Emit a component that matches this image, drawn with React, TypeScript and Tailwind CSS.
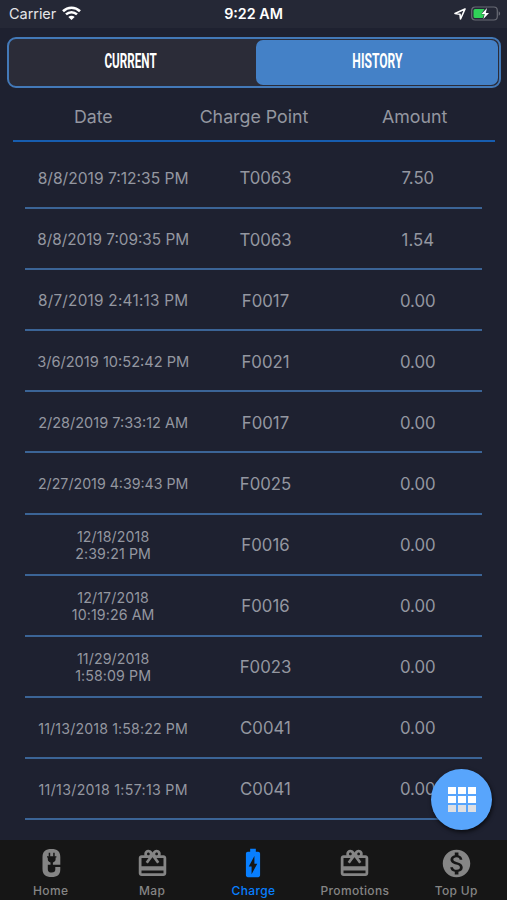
import React from 'react';
import { MdBatteryChargingFull, MdCardGiftcard, MdMonetizationOn } from 'react-icons/md';

type Charge = {
  date: string[];
  dateClass: string;
  point: string;
  amount: string;
};

const charges: Charge[] = [
  { date: ['8/8/2019 7:12:35 PM'], dateClass: 'text-[15.6px]', point: 'T0063', amount: '7.50' },
  { date: ['8/8/2019 7:09:35 PM'], dateClass: 'text-[15.3px]', point: 'T0063', amount: '1.54' },
  { date: ['8/7/2019 2:41:13 PM'], dateClass: 'text-[15.3px] tracking-[0.25px]', point: 'F0017', amount: '0.00' },
  { date: ['3/6/2019 10:52:42 PM'], dateClass: 'text-[14.6px]', point: 'F0021', amount: '0.00' },
  { date: ['2/28/2019 7:33:12 AM'], dateClass: 'text-[14.5px]', point: 'F0017', amount: '0.00' },
  { date: ['2/27/2019 4:39:43 PM'], dateClass: 'text-[14.2px]', point: 'F0025', amount: '0.00' },
  { date: ['12/18/2018', '2:39:21 PM'], dateClass: 'text-[14.2px] tracking-[0.1px]', point: 'F0016', amount: '0.00' },
  { date: ['12/17/2018', '10:19:26 AM'], dateClass: 'text-[14.2px] tracking-[0.1px]', point: 'F0016', amount: '0.00' },
  { date: ['11/29/2018', '1:58:09 PM'], dateClass: 'text-[14.2px] tracking-[0.1px]', point: 'F0023', amount: '0.00' },
  { date: ['11/13/2018 1:58:22 PM'], dateClass: 'text-[14.2px] tracking-[0.13px]', point: 'C0041', amount: '0.00' },
  { date: ['11/13/2018 1:57:13 PM'], dateClass: 'text-[14.2px] tracking-[0.3px]', point: 'C0041', amount: '0.00' },
];

const StatusBar: React.FC = () => (
  <div className="grid h-7 grid-cols-3 items-center bg-[#252836] pl-[9px] pr-[6px] text-[14.5px] text-[#e4e5e8]">
    <div className="flex items-center gap-[6px]">
      <span className="tracking-[-0.05px]">Carrier</span>
      <svg className="-mt-[2px] h-[14px] w-[19px]" viewBox="0 0 19 14" fill="none" stroke="#fff" strokeWidth="2.6">
        <path d="M1 5.2C5.8.6 13.2.6 18 5.2" />
        <path d="M4 8.4c3.2-2.9 7.8-2.9 11 0" />
        <path d="M9.5 14 6.3 10.9c1.8-1.7 4.6-1.7 6.4 0z" fill="#fff" stroke="none" />
      </svg>
    </div>
    <span className="pr-[3px] text-center text-[14.3px] font-semibold text-white">9:22 AM</span>
    <div className="flex items-center justify-end gap-[5px]">
      <svg className="h-3 w-3" viewBox="0 0 12 12" fill="none" stroke="#fff" strokeWidth="1.6" strokeLinejoin="round">
        <path d="M11 1 1 5.5l5 .7.5 4.8z" />
      </svg>
      <svg className="-mt-[2px] h-[15px] w-[30px]" viewBox="0 0 30 15">
        <rect x=".7" y="1" width="25.6" height="13" rx="3.5" fill="none" stroke="#696b75" strokeWidth="1.2" />
        <path d="M4 3h9.5l-3.2 5.2h3L11.8 12H4a1.5 1.5 0 0 1-1.5-1.5v-6A1.5 1.5 0 0 1 4 3z" fill="#30d158" />
        <path d="m16 2-5.5 6h3.2L12.4 13 18 7h-3.2z" fill="#fff" />
        <path d="M27.7 5.2v4.6c1.9-.8 1.9-3.8 0-4.6z" fill="#696b75" />
      </svg>
    </div>
  </div>
);

const Tabs: React.FC = () => (
  <div className="ml-[7px] mr-[6px] mt-[9px] flex h-[51px] rounded-[9px] border-2 border-[#4379b8] bg-[#2b2c38] p-px text-[19.5px] font-bold text-white">
    <button className="flex flex-1 items-center justify-center pb-[2px] pr-[5px]">
      <span className="scale-x-[0.6] font-['Roboto']">CURRENT</span>
    </button>
    <button className="flex w-[242px] items-center justify-center rounded-[7px] bg-[#4481c7] pb-[2px]">
      <span className="scale-x-[0.62] font-['Roboto']">HISTORY</span>
    </button>
  </div>
);

const HomeIcon: React.FC = () => (
  <svg className="h-[30px] w-[30px]" viewBox="0 0 30 30">
    {/* Letter body, open on the lower right */}
    <path
      d="M15.5 1C9.5 1 6.5 3.5 6.5 9v12c0 5.4 3 8 9 8s8.8-2.6 8.8-7.6V19h-5v2.6c0 2-1 3-3.6 3s-3.9-1-3.9-3.4v-4.4h12.5V9c0-5.5-2.9-8-8.8-8z"
      fill="currentColor"
    />
    {/* Plug and its cord */}
    <g fill="#161616">
      <path d="M12.7 4.8h1.5v4h-1.5zM17.2 4.8h1.5v4h-1.5z" />
      <path d="M11 8.2h9.4v1.3h-.8v1.7c0 1.7-1.2 2.8-2.7 3.2v2.6h-2.4v-2.6c-1.5-.4-2.7-1.5-2.7-3.2V9.500H11z" />
    </g>
  </svg>
);

const navItems = [
  { label: 'Home', icon: <HomeIcon /> },
  { label: 'Map', icon: <MdCardGiftcard size={33} /> },
  { label: 'Charge', icon: <MdBatteryChargingFull size={34} />, active: true },
  { label: 'Promotions', icon: <MdCardGiftcard size={33} /> },
  { label: 'Top Up', icon: <MdMonetizationOn size={33} /> },
];

const BottomNav: React.FC = () => (
  <nav className="grid h-[60px] grid-cols-5 bg-[#161616]">
    {navItems.map((item) => (
      <div
        key={item.label}
        className={`flex flex-col items-center ${item.active ? 'text-[#087fff]' : 'text-[#858585]'}`}
      >
        <div className="mt-[5px] flex h-9 items-center">{item.icon}</div>
        <span className="mt-[2px] text-[12px] font-medium leading-4 tracking-[0.35px]">{item.label}</span>
      </div>
    ))}
  </nav>
);

const App: React.FC = () => {
  return (
    <div className="relative flex h-[900px] w-[507px] flex-col overflow-hidden bg-[#1e2130] font-['Inter',sans-serif] text-[#9497a0]">
      <StatusBar />
      <Tabs />

      {/* Column titles */}
      <div className="ml-[13px] mr-3 grid h-[54px] grid-cols-3 items-center border-b-2 border-[#175daf] pt-[7px] text-center text-[17.8px]">
        <span>Date</span>
        <span>Charge Point</span>
        <span>Amount</span>
      </div>

      {/* Charging history */}
      <div className="ml-[25px] mr-[25px] mt-[6px] flex-1">
        {charges.map((charge) => (
          <div key={charge.date.join(' ')} className="h-[61.1px] border-b-2 border-[#3b6496]">
            <div className="-mr-3 ml-3 grid h-full grid-cols-3 items-center pt-[3px] text-center text-[16.8px]">
              <div className={`whitespace-nowrap leading-[16.5px] ${charge.dateClass}`}>
                {charge.date.map((line) => (
                  <p key={line}>{line}</p>
                ))}
              </div>
              <span>{charge.point}</span>
              <span>{charge.amount}</span>
            </div>
          </div>
        ))}
      </div>

      <BottomNav />

      {/* Floating menu button */}
      <button className="absolute bottom-[70px] right-[15px] flex h-[61px] w-[61px] items-center justify-center rounded-full bg-[#58a5fc] shadow-[1px_2px_4px_rgba(0,0,0,0.7)]">
        <span className="grid grid-cols-3 gap-x-[2px] gap-y-[2px]">
          {[0, 1, 2, 3, 4, 5, 6, 7, 8].map((cell) => (
            <span key={cell} className={`h-[7px] w-2 ${cell < 6 ? 'bg-white' : 'bg-[#dddfe3]'}`} />
          ))}
        </span>
      </button>
    </div>
  );
};

export default App;
